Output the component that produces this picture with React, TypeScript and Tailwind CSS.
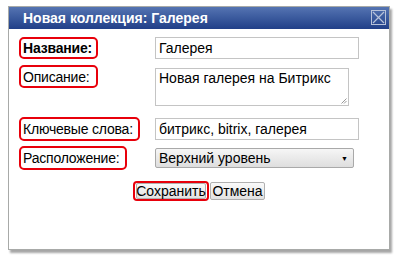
import React from "react";

const font = { fontFamily: '"Liberation Sans", Arial, sans-serif' };

function RedBox({ w, h, bold, top, children }: { w: number; h: number; bold?: boolean; top?: boolean; children: React.ReactNode }) {
  return (
    <div
      className={`box-border flex rounded-[5px] border-2 border-[#e8000b] pl-[2px] text-[14px] leading-none tracking-[-0.2px] text-black ${top ? "items-start pt-[3px]" : "items-center"} ${bold ? "font-bold" : ""}`}
      style={{ width: w, height: h }}
    >
      {children}
    </div>
  );
}

export default function App() {
  return (
    <div className="h-[259px] w-[396px] bg-white pl-[8px] pt-[6px]" style={font}>
      <div className="relative box-border h-[244px] w-[382px] border border-[#a8aaa8] bg-white shadow-[2px_3px_2px_rgba(0,0,0,0.35)]">
        <div className="flex h-[22px] items-center justify-between bg-gradient-to-b from-[#5574b2] to-[#213f88] pl-[14px] pr-[3px]">
          <span className="text-[14px] font-bold leading-none text-white">Новая коллекция: Галерея</span>
          <svg width="15" height="15" viewBox="0 0 15 15" className="mb-[2px]">
            <rect x="0.5" y="0.5" width="14" height="14" fill="none" stroke="#b7c2da" strokeWidth="1" />
            <path d="M2 2 L13 13 M13 2 L2 13" stroke="#b7c2da" strokeWidth="1.2" />
          </svg>
        </div>
        <div className="flex flex-col pl-[10px] pt-[8px]">
          <div className="flex items-start">
            <div className="w-[136px]">
              <RedBox w={79} h={22} bold>Название:</RedBox>
            </div>
            <input
              readOnly
              value="Галерея"
              className="box-border h-[22px] w-[204px] border border-[#c4c4c4] px-[3px] text-[14px] text-black outline-none"
              style={font}
            />
          </div>
          <div className="mt-[6px] flex items-start">
            <div className="w-[136px]">
              <RedBox w={79} h={23} top>Описание:</RedBox>
            </div>
            <div className="relative mt-[3px]">
              <textarea
                readOnly
                value="Новая галерея на Битрикс"
                className="box-border block h-[38px] w-[194px] resize-none border border-[#c4c4c4] px-[3px] pt-[1px] text-[14px] leading-[17px] text-black outline-none"
                style={font}
              />
              <svg width="6" height="6" viewBox="0 0 6 6" className="absolute bottom-[2px] right-[2px]">
                <path d="M0.5 5.5 L5.5 0.5 M3 5.5 L5.5 3" stroke="#999" strokeWidth="1" />
              </svg>
            </div>
          </div>
          <div className="mt-[11px] flex items-start">
            <div className="w-[136px]">
              <RedBox w={121} h={24}>Ключевые слова:</RedBox>
            </div>
            <input
              readOnly
              value="битрикс, bitrix, галерея"
              className="mt-[1px] box-border h-[22px] w-[204px] border border-[#c4c4c4] px-[3px] text-[14px] text-black outline-none"
              style={font}
            />
          </div>
          <div className="mt-[5px] flex items-start">
            <div className="w-[136px]">
              <RedBox w={108} h={24}>Расположение:</RedBox>
            </div>
            <div className="mt-[2px] box-border flex h-[20px] w-[199px] items-center justify-between rounded-[2px] border border-[#a9a9a9] bg-gradient-to-b from-[#f6f6f6] to-[#dedede] pl-[3px] pr-[5px] text-[14px] leading-none text-black">
              <span>Верхний уровень</span>
              <span className="text-[7px]">▼</span>
            </div>
          </div>
          <div className="mt-[11px] flex items-center pl-[114px]">
            <div className="box-border flex h-[20px] w-[76px] items-center justify-center rounded-[4px] border-2 border-[#e8000b]">
              <div className="box-border flex h-[16px] w-[70px] items-center justify-center rounded-[2px] border border-[#b0b0b0] bg-gradient-to-b from-[#fafafa] to-[#e2e2e2] text-[14px] leading-none text-black">
                Сохранить
              </div>
            </div>
            <div className="ml-[1px] box-border flex h-[18px] w-[55px] items-center justify-center rounded-[2px] border border-[#b0b0b0] bg-gradient-to-b from-[#fafafa] to-[#e2e2e2] text-[14px] leading-none text-black">
              Отмена
            </div>
          </div>
        </div>
      </div>
    </div>
  );
}
